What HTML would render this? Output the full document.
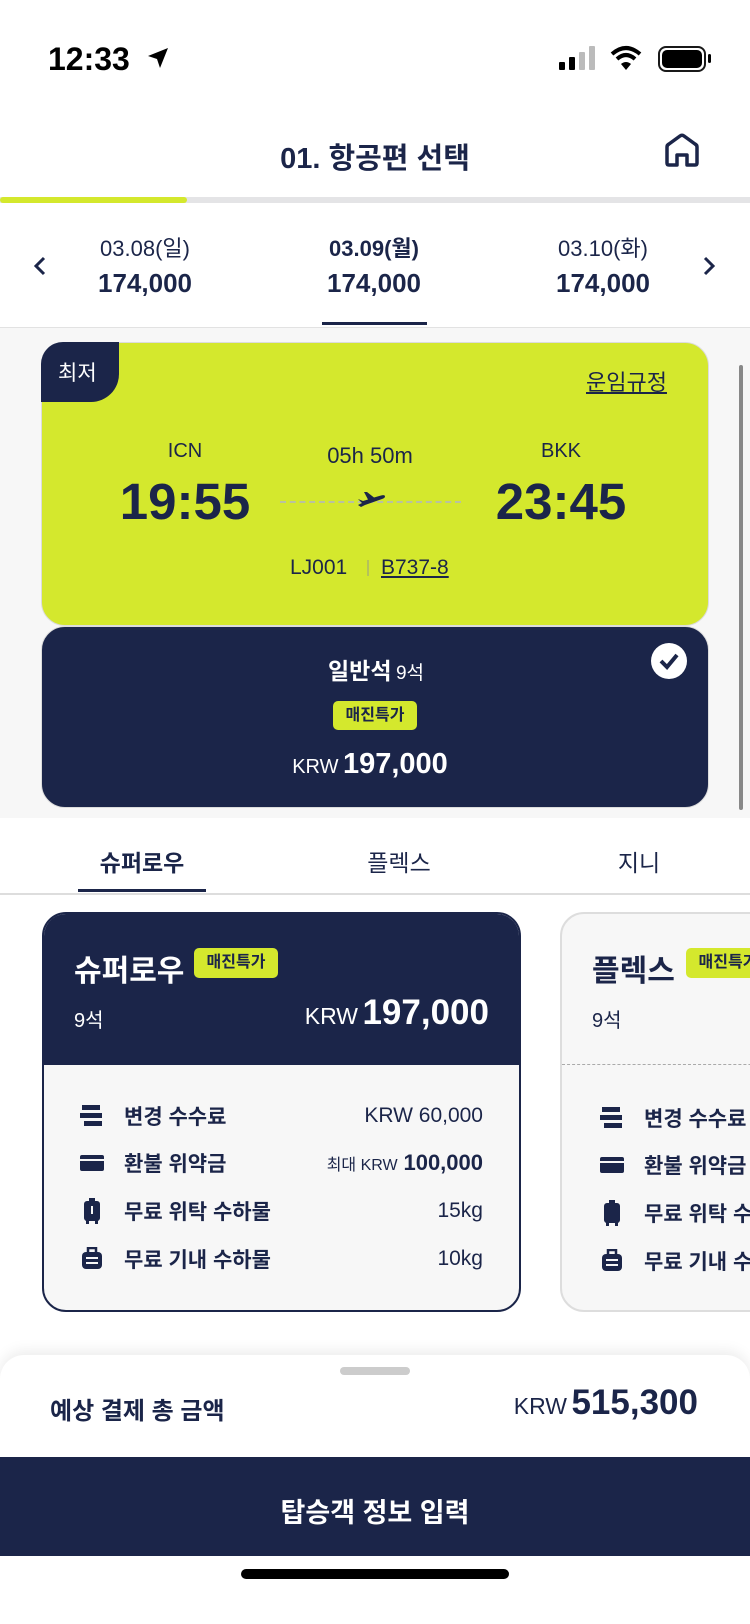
<!DOCTYPE html>
<html style="width:750px;height:1624px;overflow:hidden"><head><meta charset="utf-8"><style>
*{margin:0;padding:0;box-sizing:border-box}
body{width:750px;height:1624px;position:relative;background:#fff;font-family:"Liberation Sans","Noto Sans CJK KR",sans-serif;color:#1b2549;overflow:hidden}
.a{position:absolute}
.c{transform:translateX(-50%);white-space:nowrap}
.navy{background:#1b2549}
.lime{background:#d4e82d}
.row{position:absolute;left:80px;right:36px;height:30px;display:flex;align-items:center;font-size:21px;font-weight:700}
.row .v{margin-left:auto;font-weight:400;font-size:21px}
.ic{width:24px;margin-right:20px;display:flex;justify-content:center}
</style></head><body>
<div class="a" style="left:48px;top:41px;font-size:32px;font-weight:700;color:#000">12:33</div>
<svg class="a" style="left:146px;top:46px" width="24" height="24" viewBox="0 0 24 24"><path d="M22 2 L2 10 L11 13 L14 22 Z" fill="#000"/></svg>
<div class="a" style="left:559px;top:62px;width:6px;height:8px;background:#000;border-radius:1px"></div>
<div class="a" style="left:569px;top:57px;width:6px;height:13px;background:#000;border-radius:1px"></div>
<div class="a" style="left:579px;top:52px;width:6px;height:18px;background:#bbb;border-radius:1px"></div>
<div class="a" style="left:589px;top:46px;width:6px;height:24px;background:#bbb;border-radius:1px"></div>
<svg class="a" style="left:610px;top:45px" width="32" height="26" viewBox="0 0 32 26"><path d="M2 9 Q16 -3 30 9" stroke="#000" stroke-width="4" fill="none"/><path d="M7 14 Q16 6 25 14" stroke="#000" stroke-width="4" fill="none"/><path d="M11 19 L16 25 L21 19 Q16 15 11 19Z" fill="#000"/></svg>
<div class="a" style="left:658px;top:46px;width:48px;height:26px;border:2.5px solid #000;border-radius:8px;opacity:.9"></div>
<div class="a" style="left:662px;top:50px;width:40px;height:18px;background:#000;border-radius:5px"></div>
<div class="a" style="left:708px;top:54px;width:3px;height:9px;background:#000;border-radius:2px"></div>
<div class="a c" style="left:375px;top:135px;font-size:29px;font-weight:700">01. 항공편 선택</div>
<svg class="a" style="left:662px;top:130px" width="40" height="40" viewBox="0 0 40 40"><path d="M5 17 Q5 15 7 14 L18 6 Q20 4.5 22 6 L33 14 Q35 15 35 17 V33 Q35 35 33 35 H25 V25 H15 V35 H7 Q5 35 5 33 Z" fill="none" stroke="#1b2549" stroke-width="3.5" stroke-linejoin="round"/></svg>
<div class="a" style="left:0;top:197px;width:750px;height:6px;background:#e4e4e6"></div>
<div class="a lime" style="left:0;top:197px;width:187px;height:6px;border-radius:3px"></div>
<svg class="a" style="left:32px;top:255px" width="16" height="22" viewBox="0 0 16 22"><path d="M12 3 L4 11 L12 19" fill="none" stroke="#1b2549" stroke-width="3"/></svg>
<svg class="a" style="left:701px;top:255px" width="16" height="22" viewBox="0 0 16 22"><path d="M4 3 L12 11 L4 19" fill="none" stroke="#1b2549" stroke-width="3"/></svg>
<div class="a c" style="left:145px;top:231px;font-size:22px">03.08(일)</div>
<div class="a c" style="left:145px;top:268px;font-size:26px;font-weight:700">174,000</div>
<div class="a c" style="left:374px;top:231px;font-size:22px;font-weight:700">03.09(월)</div>
<div class="a c" style="left:374px;top:268px;font-size:26px;font-weight:700">174,000</div>
<div class="a c" style="left:603px;top:231px;font-size:22px">03.10(화)</div>
<div class="a c" style="left:603px;top:268px;font-size:26px;font-weight:700">174,000</div>
<div class="a" style="left:0;top:327px;width:750px;height:491px;background:#f7f7f7;border-top:1.5px solid #e2e2e2"></div>
<div class="a navy" style="left:322px;top:322px;width:105px;height:3px"></div>
<div class="a lime" style="left:41px;top:342px;width:668px;height:284px;border-radius:24px;border:1.5px solid #dcdcdc"></div>
<div class="a navy" style="left:41px;top:342px;width:78px;height:60px;border-radius:22px 0 28px 0"></div>
<div class="a" style="left:58px;top:357px;font-size:21px;color:#fff">최저</div>
<div class="a" style="left:586px;top:365px;font-size:22px;text-decoration:underline">운임규정</div>
<div class="a c" style="left:185px;top:440px;font-size:20px">ICN</div>
<div class="a c" style="left:185px;top:472px;font-size:51px;font-weight:700">19:55</div>
<div class="a c" style="left:370px;top:443px;font-size:22px">05h 50m</div>
<div class="a c" style="left:561px;top:440px;font-size:20px">BKK</div>
<div class="a c" style="left:561px;top:472px;font-size:51px;font-weight:700">23:45</div>
<div class="a" style="left:280px;top:501px;width:181px;border-top:2px dashed #b9c2a0"></div>
<svg class="a" style="left:355px;top:488px" width="32" height="24" viewBox="0 0 32 24"><path d="M3 11 L8 13 L13 11.5 L9 4 L12 4 L19 9.5 L26 7.5 Q30 6.5 30 8.5 Q30 10 27 11 L10 17 L6 19 L3 17 L7 15 Z" fill="#1b2549"/></svg>
<div class="a" style="left:290px;top:556px;font-size:21px">LJ001</div>
<div class="a" style="left:367px;top:560px;width:1.5px;height:16px;background:#b5c25a"></div>
<div class="a" style="left:381px;top:556px;font-size:21px;text-decoration:underline">B737-8</div>
<div class="a navy" style="left:41px;top:626px;width:668px;height:182px;border-radius:24px;border:1.5px solid #dcdcdc"></div>
<div class="a c" style="left:376px;top:652px;color:#fff;white-space:nowrap"><span style="font-size:23px;font-weight:700">일반석</span> <span style="font-size:19px">9석</span></div>
<div class="a lime" style="left:333px;top:701px;width:84px;height:29px;border-radius:5px;font-size:16px;font-weight:700;text-align:center;line-height:29px">매진특가</div>
<div class="a c" style="left:370px;top:748px;color:#fff"><span style="font-size:20px">KRW</span> <span style="font-size:29px;font-weight:700">197,000</span></div>
<svg class="a" style="left:651px;top:643px" width="36" height="36" viewBox="0 0 36 36"><circle cx="18" cy="18" r="18" fill="#fff"/><path d="M10 18 L16 24 L26 12" fill="none" stroke="#1b2549" stroke-width="4"/></svg>
<div class="a" style="left:739px;top:365px;width:4px;height:445px;background:#888;border-radius:2px"></div>
<div class="a c" style="left:142px;top:844px;font-size:23px;font-weight:700">슈퍼로우</div>
<div class="a c" style="left:399px;top:844px;font-size:23px">플렉스</div>
<div class="a c" style="left:639px;top:844px;font-size:23px">지니</div>
<div class="a" style="left:0;top:893px;width:750px;height:1.5px;background:#ddd"></div>
<div class="a navy" style="left:78px;top:889px;width:128px;height:3px"></div>
<div class="a" style="left:42px;top:912px;width:479px;height:400px;border-radius:24px;border:2px solid #1b2549;background:#f7f7f7;overflow:hidden">
<div class="navy" style="height:151px;position:relative">
<div class="a" style="left:30px;top:32px;font-size:30px;font-weight:700;color:#fff">슈퍼로우</div>
<div class="a lime" style="left:150px;top:34px;width:84px;height:30px;border-radius:5px;font-size:16px;font-weight:700;text-align:center;line-height:30px;color:#1b2549">매진특가</div>
<div class="a" style="left:30px;top:90px;font-size:20px;color:#fff">9석</div>
<div class="a" style="right:30px;top:79px;color:#fff;white-space:nowrap"><span style="font-size:23px">KRW</span> <span style="font-size:35px;font-weight:700">197,000</span></div>
</div></div>
<div class="row" style="top:1101px;right:267px;left:80px"><span class="ic"><svg width="24" height="22" viewBox="0 0 24 22"><rect x="2" y="0" width="18" height="5" fill="#1b2549"/><rect x="0" y="8" width="22" height="5" fill="#1b2549"/><rect x="4" y="16" width="18" height="5" fill="#1b2549"/></svg></span>변경 수수료<span class="v">KRW 60,000</span></div>
<div class="row" style="top:1148px;right:267px;left:80px"><span class="ic"><svg width="24" height="16" viewBox="0 0 24 16"><rect width="24" height="16" rx="2" fill="#1b2549"/><rect y="4" width="24" height="2" fill="#f7f7f7"/></svg></span>환불 위약금<span class="v"><span style="font-size:16px">최대 KRW</span> <b style="font-size:22px">100,000</b></span></div>
<div class="row" style="top:1196px;right:267px;left:80px"><span class="ic"><svg width="16" height="26" viewBox="0 0 16 26"><rect x="5" y="0" width="6" height="4" fill="#1b2549"/><rect x="0" y="3" width="16" height="20" rx="3" fill="#1b2549"/><rect x="2" y="22" width="3" height="4" fill="#1b2549"/><rect x="11" y="22" width="3" height="4" fill="#1b2549"/><rect x="7" y="8" width="2" height="8" fill="#f7f7f7"/></svg></span>무료 위탁 수하물<span class="v">15kg</span></div>
<div class="row" style="top:1244px;right:267px;left:80px"><span class="ic"><svg width="20" height="24" viewBox="0 0 20 24"><path d="M6 5 V1 H14 V5" fill="none" stroke="#1b2549" stroke-width="2.5"/><rect x="0" y="5" width="20" height="17" rx="4" fill="#1b2549"/><rect x="4" y="10" width="12" height="2" fill="#f7f7f7"/><rect x="4" y="15" width="12" height="2" fill="#f7f7f7"/></svg></span>무료 기내 수하물<span class="v">10kg</span></div>
<div class="a" style="left:560px;top:912px;width:190px;height:400px;overflow:hidden">
<div class="a" style="left:0;top:0;width:260px;height:400px;border-radius:24px;border:2px solid #ddd;background:#f7f7f7;overflow:hidden">
<div class="a" style="left:30px;top:32px;font-size:30px;font-weight:700;white-space:nowrap">플렉스</div>
<div class="a lime" style="left:124px;top:34px;width:84px;height:30px;border-radius:5px;font-size:16px;font-weight:700;text-align:center;line-height:30px">매진특가</div>
<div class="a" style="left:30px;top:90px;font-size:20px">9석</div>
<div class="a" style="left:0;top:150px;width:260px;border-top:1.5px dashed #aaa"></div>
<div class="row" style="top:189px;left:38px;right:auto;white-space:nowrap"><span class="ic"><svg width="24" height="22" viewBox="0 0 24 22"><rect x="2" y="0" width="18" height="5" fill="#1b2549"/><rect x="0" y="8" width="22" height="5" fill="#1b2549"/><rect x="4" y="16" width="18" height="5" fill="#1b2549"/></svg></span>변경 수수료</div>
<div class="row" style="top:236px;left:38px;right:auto;white-space:nowrap"><span class="ic"><svg width="24" height="16" viewBox="0 0 24 16"><rect width="24" height="16" rx="2" fill="#1b2549"/><rect y="4" width="24" height="2" fill="#f7f7f7"/></svg></span>환불 위약금</div>
<div class="row" style="top:284px;left:38px;right:auto;white-space:nowrap"><span class="ic"><svg width="16" height="26" viewBox="0 0 16 26"><rect x="5" y="0" width="6" height="4" fill="#1b2549"/><rect x="0" y="3" width="16" height="20" rx="3" fill="#1b2549"/><rect x="2" y="22" width="3" height="4" fill="#1b2549"/><rect x="11" y="22" width="3" height="4" fill="#1b2549"/></svg></span>무료 위탁 수하물</div>
<div class="row" style="top:332px;left:38px;right:auto;white-space:nowrap"><span class="ic"><svg width="20" height="24" viewBox="0 0 20 24"><path d="M6 5 V1 H14 V5" fill="none" stroke="#1b2549" stroke-width="2.5"/><rect x="0" y="5" width="20" height="17" rx="4" fill="#1b2549"/><rect x="4" y="10" width="12" height="2" fill="#f7f7f7"/><rect x="4" y="15" width="12" height="2" fill="#f7f7f7"/></svg></span>무료 기내 수하물</div>
</div></div>
<div class="a" style="left:0;top:1355px;width:750px;height:269px;background:#fff;border-radius:24px 24px 0 0;box-shadow:0 -4px 14px rgba(0,0,0,.08)"></div>
<div class="a" style="left:340px;top:1367px;width:70px;height:8px;background:#ccc;border-radius:4px"></div>
<div class="a" style="left:50px;top:1391px;font-size:24px;font-weight:700">예상 결제 총 금액</div>
<div class="a" style="right:52px;top:1383px;white-space:nowrap"><span style="font-size:23px">KRW</span> <span style="font-size:35px;font-weight:700">515,300</span></div>
<div class="a navy" style="left:0;top:1457px;width:750px;height:99px"></div>
<div class="a c" style="left:375px;top:1491px;font-size:27px;font-weight:700;color:#fff">탑승객 정보 입력</div>
<div class="a" style="left:241px;top:1569px;width:268px;height:10px;background:#000;border-radius:5px"></div>
</body></html>
